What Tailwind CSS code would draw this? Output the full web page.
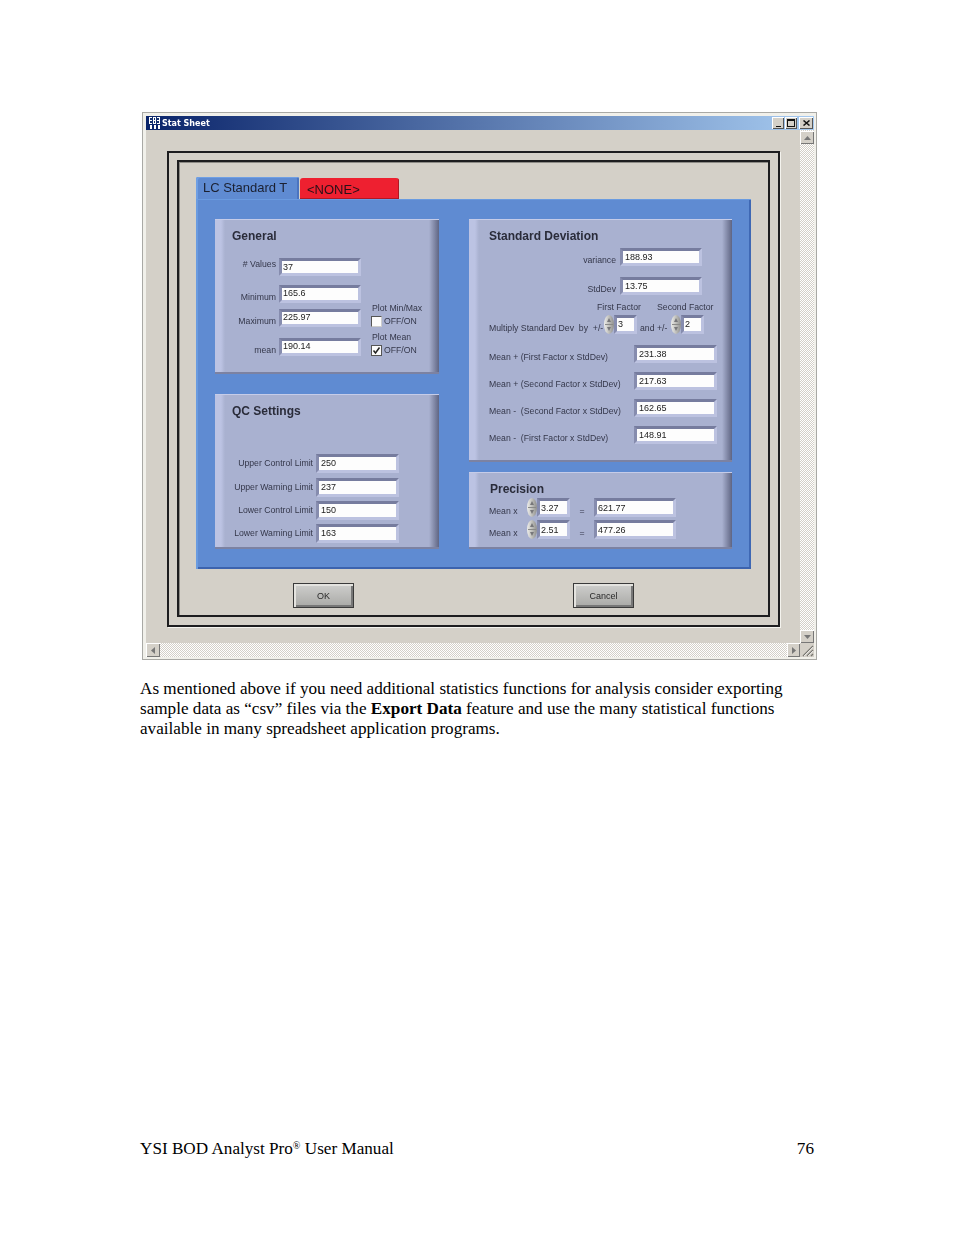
<!DOCTYPE html>
<html>
<head>
<meta charset="utf-8">
<script src="https://cdn.jsdelivr.net/npm/@tailwindcss/browser@4"></script>
</head>
<body class="bg-white">
<div class="w-[954px] h-[1235px] flex flex-col pt-[112px] px-[140px] pb-[76px] text-black font-['Liberation_Serif',serif] text-[17.15px] leading-[20px] overflow-hidden">

  <!-- window -->
  <div class="ml-[2px] w-[675px] h-[548px] shrink-0 box-border border border-[#a9a9a5] bg-[#f1f0ea] pl-[3px] pt-[3px] pr-[2px] pb-[2px] flex flex-col blur-[0.4px] font-['Liberation_Sans',sans-serif] text-[8.7px] leading-none text-[#34374a]">
    <!-- title bar -->
    <div class="h-[14px] shrink-0 flex items-center bg-[linear-gradient(to_right,#0a246a,#a6caf0)]">
      <svg class="ml-[3px] w-[11px] h-[12px]" viewBox="0 0 11 12"><path fill="#fff" d="M0 0h11v7H0zM1 8h2v4H1zM5 8h2v4H5zM9 8h2v4H9z"/><path fill="#14306f" d="M1 1h2v2H1zM5 1h1v2H5zM8 1h2v2H8zM1 4h2v2H1zM5 4h1v2H5zM8 4h2v2H8zM3 0h1v7H3zM7 0h1v7H7z"/></svg>
      <span class="ml-[2px] pt-[2px] font-['DejaVu_Sans',sans-serif] font-bold text-[8px] text-white">Stat Sheet</span>
      <div class="ml-auto mr-[1px] flex items-center">
        <div class="w-[12px] h-[12px] bg-[#d4d0c8] shadow-[inset_1px_1px_0_#fff,inset_-1px_-1px_0_#555] flex items-end justify-center pb-[2px]"><div class="w-[5px] h-[1px] bg-[#111]"></div></div>
        <div class="ml-[1px] w-[12px] h-[12px] bg-[#d4d0c8] shadow-[inset_1px_1px_0_#fff,inset_-1px_-1px_0_#555] flex items-center justify-center"><div class="w-[8px] h-[8px] border border-t-2 border-[#111]"></div></div>
        <div class="ml-[2px] w-[14px] h-[12px] bg-[#d4d0c8] shadow-[inset_1px_1px_0_#fff,inset_-1px_-1px_0_#555] flex items-center justify-center"><svg class="w-[7px] h-[6px]" viewBox="0 0 7 6"><path d="M0.5 0.5L6.5 5.5M6.5 0.5L0.5 5.5" stroke="#111" stroke-width="1.5"/></svg></div>
      </div>
    </div>

    <div class="flex-1 grid grid-cols-[1fr_14px] grid-rows-[1fr_14px] bg-[#d4d0c8]">
      <!-- client area -->
      <div class="pl-[21px] pt-[21px]">
        <div class="w-[613px] h-[476px] box-border border-2 border-[#1d1d1f] pl-[8px] pt-[7px] shadow-[1px_1px_0_#f4f3ee]">
          <div class="w-[593px] h-[457px] box-border border-2 border-[#1d1d1f] pl-[17px] pt-[15px] shadow-[inset_1px_1px_0_#8d8b86]">

            <div class="w-[555px]">
              <!-- tabs -->
              <div class="h-[22px] flex items-end">
                <div class="w-[103px] h-[22px] pl-[7px] pt-[4px] bg-[#5f8bd2] rounded-t-[2px] shadow-[inset_2px_1px_0_#6f9fe4,inset_-2px_0_0_#4a74c0] font-['Liberation_Sans',sans-serif] text-[13px] leading-[14px] text-[#1b2030]">LC Standard T</div>
                <div class="ml-[1px] w-[99px] h-[21px] pl-[7px] pt-[5px] bg-[#ee2030] rounded-t-[3px] shadow-[inset_-1px_-1px_0_#b01824] text-[13px] leading-[14px] text-[#2a1018]">&lt;NONE&gt;</div>
              </div>

              <!-- tab panel -->
              <div class="h-[370px] box-border pl-[19px] pt-[20px] flex bg-[#5f8bd2] shadow-[inset_2px_0_0_#6a9be0,inset_0_1px_0_#6a9be0,inset_0_-2px_0_#3c63ae,inset_-2px_0_0_#3f68b4]">

                <!-- left column -->
                <div class="w-[224px] flex flex-col gap-[20px]">
                  <!-- General -->
                  <div class="h-[155px] flex bg-[linear-gradient(to_right,#bcc3e3_0,#bcc3e3_6px,#a9b1d0_10px,#a9b1d0_calc(100%-10px),#5f6583_100%)] shadow-[inset_0_1px_0_#c6cce8,inset_0_-2px_0_#7c82a2]">
                    <div class="w-[146px]">
                      <div class="pt-[10px] pl-[17px] font-bold text-[12px] leading-[14px] text-[#2a2c3a]">General</div>
                      <div class="mt-[15px] h-[18px] flex">
                        <div class="w-[61px] mr-[3px] pt-[2px] text-right">#&nbsp;Values</div>
                        <div class="w-[82px] box-border border-[3px] border-t-[#767c9e] border-l-[#868cae] border-r-[#bcc2e0] border-b-[#bcc2e0] bg-[#fdfdfd] pl-[1px] pt-[2px] text-[9px] text-[#222]">37</div>
                      </div>
                      <div class="mt-[9px] h-[18px] flex">
                        <div class="w-[61px] mr-[3px] pt-[8px] text-right">Minimum</div>
                        <div class="w-[82px] box-border border-[3px] border-t-[#767c9e] border-l-[#868cae] border-r-[#bcc2e0] border-b-[#bcc2e0] bg-[#fdfdfd] pl-[1px] pt-[1px] text-[9px] text-[#222]">165.6</div>
                      </div>
                      <div class="mt-[6px] h-[18px] flex">
                        <div class="w-[61px] mr-[3px] pt-[8px] text-right">Maximum</div>
                        <div class="w-[82px] box-border border-[3px] border-t-[#767c9e] border-l-[#868cae] border-r-[#bcc2e0] border-b-[#bcc2e0] bg-[#fdfdfd] pl-[1px] pt-[1px] text-[9px] text-[#222]">225.97</div>
                      </div>
                      <div class="mt-[11px] h-[18px] flex">
                        <div class="w-[61px] mr-[3px] pt-[8px] text-right">mean</div>
                        <div class="w-[82px] box-border border-[3px] border-t-[#767c9e] border-l-[#868cae] border-r-[#bcc2e0] border-b-[#bcc2e0] bg-[#fdfdfd] pl-[1px] pt-[1px] text-[9px] text-[#222]">190.14</div>
                      </div>
                    </div>
                    <div class="ml-[10px] pt-[85px]">
                      <div class="h-[10px] ml-[1px]">Plot Min/Max</div>
                      <div class="mt-[2px] h-[11px] flex items-center">
                        <div class="w-[11px] h-[11px] box-border border border-t-[#555] border-l-[#555] border-r-[#ccc] border-b-[#ccc] bg-[#fcfcfc]"></div>
                        <span class="ml-[2px]">OFF/ON</span>
                      </div>
                      <div class="mt-[6px] h-[10px] ml-[1px]">Plot Mean</div>
                      <div class="mt-[2px] h-[11px] flex items-center">
                        <div class="w-[11px] h-[11px] box-border border border-[#555] bg-[#fcfcfc]"><svg class="w-[9px] h-[9px]" viewBox="0 0 9 9"><path d="M1.5 4.5L3.5 7L7.5 1.5" fill="none" stroke="#222" stroke-width="1.5"/></svg></div>
                        <span class="ml-[2px]">OFF/ON</span>
                      </div>
                    </div>
                  </div>

                  <!-- QC Settings -->
                  <div class="h-[155px] bg-[linear-gradient(to_right,#bcc3e3_0,#bcc3e3_6px,#a9b1d0_10px,#a9b1d0_calc(100%-10px),#5f6583_100%)] shadow-[inset_0_1px_0_#c6cce8,inset_0_-2px_0_#7c82a2]">
                    <div class="pt-[10px] pl-[17px] font-bold text-[12px] leading-[14px] text-[#2a2c3a]">QC Settings</div>
                    <div class="mt-[36px] h-[19px] flex items-center">
                      <div class="w-[98px] mr-[3px] text-right">Upper Control Limit</div>
                      <div class="w-[83px] h-[19px] box-border border-[3px] border-t-[#767c9e] border-l-[#868cae] border-r-[#bcc2e0] border-b-[#bcc2e0] bg-[#fdfdfd] pl-[2px] pt-[2px] text-[9px] text-[#222]">250</div>
                    </div>
                    <div class="mt-[5px] h-[19px] flex items-center">
                      <div class="w-[98px] mr-[3px] text-right">Upper Warning Limit</div>
                      <div class="w-[83px] h-[19px] box-border border-[3px] border-t-[#767c9e] border-l-[#868cae] border-r-[#bcc2e0] border-b-[#bcc2e0] bg-[#fdfdfd] pl-[2px] pt-[2px] text-[9px] text-[#222]">237</div>
                    </div>
                    <div class="mt-[4px] h-[19px] flex items-center">
                      <div class="w-[98px] mr-[3px] text-right">Lower Control Limit</div>
                      <div class="w-[83px] h-[19px] box-border border-[3px] border-t-[#767c9e] border-l-[#868cae] border-r-[#bcc2e0] border-b-[#bcc2e0] bg-[#fdfdfd] pl-[2px] pt-[2px] text-[9px] text-[#222]">150</div>
                    </div>
                    <div class="mt-[4px] h-[19px] flex items-center">
                      <div class="w-[98px] mr-[3px] text-right">Lower Warning Limit</div>
                      <div class="w-[83px] h-[19px] box-border border-[3px] border-t-[#767c9e] border-l-[#868cae] border-r-[#bcc2e0] border-b-[#bcc2e0] bg-[#fdfdfd] pl-[2px] pt-[2px] text-[9px] text-[#222]">163</div>
                    </div>
                  </div>
                </div>

                <!-- right column -->
                <div class="ml-[30px] w-[263px] flex flex-col gap-[10px]">
                  <!-- Standard Deviation -->
                  <div class="h-[243px] bg-[linear-gradient(to_right,#bcc3e3_0,#bcc3e3_6px,#a9b1d0_10px,#a9b1d0_calc(100%-10px),#5f6583_100%)] shadow-[inset_0_1px_0_#c6cce8,inset_0_-2px_0_#7c82a2]">
                    <div class="pt-[10px] pl-[20px] font-bold text-[12px] leading-[14px] text-[#2a2c3a]">Standard Deviation</div>
                    <div class="mt-[5px] h-[18px] flex">
                      <div class="w-[147px] mr-[4px] pt-[8px] text-right">variance</div>
                      <div class="w-[82px] box-border border-[3px] border-t-[#767c9e] border-l-[#868cae] border-r-[#bcc2e0] border-b-[#bcc2e0] bg-[#fdfdfd] pl-[2px] pt-[2px] text-[9px] text-[#222]">188.93</div>
                    </div>
                    <div class="mt-[11px] h-[18px] flex">
                      <div class="w-[147px] mr-[4px] pt-[8px] text-right">StdDev</div>
                      <div class="w-[82px] box-border border-[3px] border-t-[#767c9e] border-l-[#868cae] border-r-[#bcc2e0] border-b-[#bcc2e0] bg-[#fdfdfd] pl-[2px] pt-[2px] text-[9px] text-[#222]">13.75</div>
                    </div>
                    <div class="mt-[8px] h-[10px] pl-[128px] flex">
                      <div class="w-[60px]">First Factor</div>
                      <div>Second Factor</div>
                    </div>
                    <div class="mt-[2px] h-[19px] pl-[20px] flex">
                      <div class="w-[115px] pt-[9px] whitespace-pre">Multiply Standard Dev  by  +/-</div>
                      <svg class="w-[10px] h-[19px]" viewBox="0 0 10 19"><defs><linearGradient id="s1"><stop offset="0" stop-color="#eeeeea"/><stop offset="1" stop-color="#8f8f8c"/></linearGradient></defs><ellipse cx="5" cy="9.5" rx="5" ry="9.5" fill="url(#s1)"/><path d="M1 9.5H9" stroke="#8a8a88"/><path d="M5 3L7 7H3zM5 16L3 12H7z" fill="#77777a"/></svg>
                      <div class="w-[23px] box-border border-[3px] border-t-[#767c9e] border-l-[#868cae] border-r-[#bcc2e0] border-b-[#bcc2e0] bg-[#fdfdfd] pl-[1px] pt-[2px] text-[9px] text-[#222]">3</div>
                      <div class="ml-[3px] w-[31px] pt-[9px]">and +/-</div>
                      <svg class="w-[10px] h-[19px]" viewBox="0 0 10 19"><defs><linearGradient id="s2"><stop offset="0" stop-color="#eeeeea"/><stop offset="1" stop-color="#8f8f8c"/></linearGradient></defs><ellipse cx="5" cy="9.5" rx="5" ry="9.5" fill="url(#s2)"/><path d="M1 9.5H9" stroke="#8a8a88"/><path d="M5 3L7 7H3zM5 16L3 12H7z" fill="#77777a"/></svg>
                      <div class="w-[23px] box-border border-[3px] border-t-[#767c9e] border-l-[#868cae] border-r-[#bcc2e0] border-b-[#bcc2e0] bg-[#fdfdfd] pl-[1px] pt-[2px] text-[9px] text-[#222]">2</div>
                    </div>
                    <div class="mt-[11px] h-[18px] pl-[20px] flex">
                      <div class="w-[145px] pt-[8px]">Mean + (First Factor x StdDev)</div>
                      <div class="w-[83px] box-border border-[3px] border-t-[#767c9e] border-l-[#868cae] border-r-[#bcc2e0] border-b-[#bcc2e0] bg-[#fdfdfd] pl-[2px] pt-[2px] text-[9px] text-[#222]">231.38</div>
                    </div>
                    <div class="mt-[9px] h-[18px] pl-[20px] flex">
                      <div class="w-[145px] pt-[8px]">Mean + (Second Factor x StdDev)</div>
                      <div class="w-[83px] box-border border-[3px] border-t-[#767c9e] border-l-[#868cae] border-r-[#bcc2e0] border-b-[#bcc2e0] bg-[#fdfdfd] pl-[2px] pt-[2px] text-[9px] text-[#222]">217.63</div>
                    </div>
                    <div class="mt-[9px] h-[18px] pl-[20px] flex">
                      <div class="w-[145px] pt-[8px] whitespace-pre">Mean -  (Second Factor x StdDev)</div>
                      <div class="w-[83px] box-border border-[3px] border-t-[#767c9e] border-l-[#868cae] border-r-[#bcc2e0] border-b-[#bcc2e0] bg-[#fdfdfd] pl-[2px] pt-[2px] text-[9px] text-[#222]">162.65</div>
                    </div>
                    <div class="mt-[9px] h-[18px] pl-[20px] flex">
                      <div class="w-[145px] pt-[8px] whitespace-pre">Mean -  (First Factor x StdDev)</div>
                      <div class="w-[83px] box-border border-[3px] border-t-[#767c9e] border-l-[#868cae] border-r-[#bcc2e0] border-b-[#bcc2e0] bg-[#fdfdfd] pl-[2px] pt-[2px] text-[9px] text-[#222]">148.91</div>
                    </div>
                  </div>

                  <!-- Precision -->
                  <div class="h-[77px] bg-[linear-gradient(to_right,#bcc3e3_0,#bcc3e3_6px,#a9b1d0_10px,#a9b1d0_calc(100%-10px),#5f6583_100%)] shadow-[inset_0_1px_0_#c6cce8,inset_0_-2px_0_#7c82a2]">
                    <div class="pt-[10px] pl-[21px] font-bold text-[12px] leading-[14px] text-[#2a2c3a]">Precision</div>
                    <div class="mt-[2px] h-[19px] pl-[20px] flex">
                      <div class="w-[38px] pt-[9px]">Mean x</div>
                      <svg class="w-[10px] h-[19px]" viewBox="0 0 10 19"><defs><linearGradient id="s3"><stop offset="0" stop-color="#eeeeea"/><stop offset="1" stop-color="#8f8f8c"/></linearGradient></defs><ellipse cx="5" cy="9.5" rx="5" ry="9.5" fill="url(#s3)"/><path d="M1 9.5H9" stroke="#8a8a88"/><path d="M5 3L7 7H3zM5 16L3 12H7z" fill="#77777a"/></svg>
                      <div class="w-[33px] box-border border-[3px] border-t-[#767c9e] border-l-[#868cae] border-r-[#bcc2e0] border-b-[#bcc2e0] bg-[#fdfdfd] pl-[1px] pt-[3px] text-[9px] text-[#222]">3.27</div>
                      <div class="w-[24px] pt-[9px] text-center">=</div>
                      <div class="w-[82px] box-border border-[3px] border-t-[#767c9e] border-l-[#868cae] border-r-[#bcc2e0] border-b-[#bcc2e0] bg-[#fdfdfd] pl-[1px] pt-[3px] text-[9px] text-[#222]">621.77</div>
                    </div>
                    <div class="mt-[3px] h-[19px] pl-[20px] flex">
                      <div class="w-[38px] pt-[9px]">Mean x</div>
                      <svg class="w-[10px] h-[19px]" viewBox="0 0 10 19"><defs><linearGradient id="s4"><stop offset="0" stop-color="#eeeeea"/><stop offset="1" stop-color="#8f8f8c"/></linearGradient></defs><ellipse cx="5" cy="9.5" rx="5" ry="9.5" fill="url(#s4)"/><path d="M1 9.5H9" stroke="#8a8a88"/><path d="M5 3L7 7H3zM5 16L3 12H7z" fill="#77777a"/></svg>
                      <div class="w-[33px] box-border border-[3px] border-t-[#767c9e] border-l-[#868cae] border-r-[#bcc2e0] border-b-[#bcc2e0] bg-[#fdfdfd] pl-[1px] pt-[3px] text-[9px] text-[#222]">2.51</div>
                      <div class="w-[24px] pt-[9px] text-center">=</div>
                      <div class="w-[82px] box-border border-[3px] border-t-[#767c9e] border-l-[#868cae] border-r-[#bcc2e0] border-b-[#bcc2e0] bg-[#fdfdfd] pl-[1px] pt-[3px] text-[9px] text-[#222]">477.26</div>
                    </div>
                  </div>
                </div>
              </div>

              <!-- buttons -->
              <div class="mt-[14px] flex">
                <div class="ml-[97px] w-[61px] h-[25px] box-border border border-[#3a3a3a] pt-[1px] bg-[linear-gradient(to_bottom,#cfcfcd,#a9a9a6)] shadow-[inset_2px_2px_0_#e4e3df,inset_-2px_-2px_0_#777] flex items-center justify-center text-[9px] text-[#2a2a2a]">OK</div>
                <div class="ml-[219px] w-[61px] h-[25px] box-border border border-[#3a3a3a] pt-[1px] bg-[linear-gradient(to_bottom,#cfcfcd,#a9a9a6)] shadow-[inset_2px_2px_0_#e4e3df,inset_-2px_-2px_0_#777] flex items-center justify-center text-[9px] text-[#2a2a2a]">Cancel</div>
              </div>
            </div>

          </div>
        </div>
      </div>

      <!-- vertical scrollbar -->
      <div class="flex flex-col justify-between pt-[1px] bg-[repeating-conic-gradient(#d4d0c8_0_25%,#fff_0_50%)] bg-[length:2px_2px]">
        <div class="h-[13px] bg-[#d4d0c8] shadow-[inset_1px_1px_0_#fff,inset_-1px_-1px_0_#777] flex items-center justify-center"><svg class="w-[7px] h-[4px]" viewBox="0 0 7 4"><path d="M3.5 0L7 4H0z" fill="#777"/></svg></div>
        <div class="h-[13px] bg-[#d4d0c8] shadow-[inset_1px_1px_0_#fff,inset_-1px_-1px_0_#777] flex items-center justify-center"><svg class="w-[7px] h-[4px]" viewBox="0 0 7 4"><path d="M3.5 4L7 0H0z" fill="#777"/></svg></div>
      </div>

      <!-- horizontal scrollbar -->
      <div class="flex justify-between bg-[repeating-conic-gradient(#d4d0c8_0_25%,#fff_0_50%)] bg-[length:2px_2px]">
        <div class="w-[14px] bg-[#d4d0c8] shadow-[inset_1px_1px_0_#fff,inset_-1px_-1px_0_#777] flex items-center justify-center"><svg class="w-[4px] h-[7px]" viewBox="0 0 4 7"><path d="M0 3.5L4 0V7z" fill="#777"/></svg></div>
        <div class="w-[13px] bg-[#d4d0c8] shadow-[inset_1px_1px_0_#fff,inset_-1px_-1px_0_#777] flex items-center justify-center"><svg class="w-[4px] h-[7px]" viewBox="0 0 4 7"><path d="M4 3.5L0 0V7z" fill="#777"/></svg></div>
      </div>

      <!-- grip -->
      <div class="bg-[#d4d0c8]"><svg class="w-[14px] h-[14px]" viewBox="0 0 14 14"><path d="M3 13L13 3M7 13L13 7M11 13L13 11" stroke="#77756f" stroke-width="1.3"/><path d="M4 13L13 4M8 13L13 8" stroke="#fff" stroke-width="0.7"/></svg></div>
    </div>
  </div>

  <!-- paragraph -->
  <p class="mt-[19px]">As mentioned above if you need additional statistics functions for analysis consider exporting<br>sample data as “csv” files via the <b>Export Data</b> feature and use the many statistical functions<br>available in many spreadsheet application programs.</p>

  <!-- footer -->
  <div class="mt-auto flex justify-between">
    <div>YSI BOD Analyst Pro<sup class="text-[10px]">®</sup> User Manual</div>
    <div>76</div>
  </div>
</div>
</body>
</html>
